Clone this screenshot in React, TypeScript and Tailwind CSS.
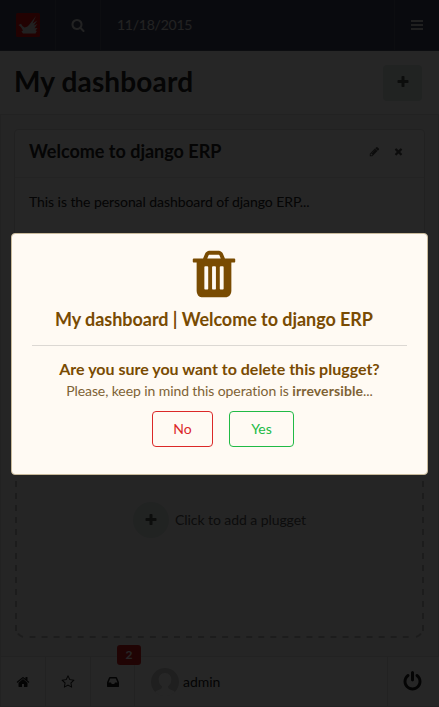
import type { ReactNode } from "react";

const paths = {
  search:
    "M1216 832q0-185-131.5-316.5t-316.5-131.5-316.5 131.5-131.5 316.5 131.5 316.5 316.5 131.5 316.5-131.5 131.5-316.5zm512 832q0 52-38 90t-90 38q-54 0-90-38l-343-342q-179 124-399 124-143 0-273.5-55.5t-225-150-150-225-55.5-273.5 55.5-273.5 150-225 225-150 273.5-55.5 273.5 55.5 225 150 150 225 55.5 273.5q0 220-124 399l343 343q37 37 37 90z",
  trash:
    "M704 1376v-704q0-14-9-23t-23-9h-64q-14 0-23 9t-9 23v704q0 14 9 23t23 9h64q14 0 23-9t9-23zm256 0v-704q0-14-9-23t-23-9h-64q-14 0-23 9t-9 23v704q0 14 9 23t23 9h64q14 0 23-9t9-23zm256 0v-704q0-14-9-23t-23-9h-64q-14 0-23 9t-9 23v704q0 14 9 23t23 9h64q14 0 23-9t9-23zm-544-992h448l-48-117q-7-9-17-11h-317q-10 2-17 11zm928 32v64q0 14-9 23t-23 9h-96v948q0 83-47 143.5t-113 60.5h-832q-66 0-113-58.5t-47-141.5v-952h-96q-14 0-23-9t-9-23v-64q0-14 9-23t23-9h309l70-167q15-37 54-63t79-26h320q40 0 79 26t54 63l70 167h309q14 0 23 9t9 23z",
  plus:
    "M1600 736v192q0 40-28 68t-68 28h-416v416q0 40-28 68t-68 28h-192q-40 0-68-28t-28-68v-416h-416q-40 0-68-28t-28-68v-192q0-40 28-68t68-28h416v-416q0-40 28-68t68-28h192q40 0 68 28t28 68v416h416q40 0 68 28t28 68z",
  pencil:
    "M491 1536l91-91-235-235-91 91v107h128v128h107zm523-928q0-22-22-22-10 0-17 7l-542 542q-7 7-7 17 0 22 22 22 10 0 17-7l542-542q7-7 7-17zm-54-192l416 416-832 832h-416v-416zm683 96q0 53-37 90l-166 166-416-416 166-165q36-38 90-38 53 0 91 38l235 234q37 39 37 91z",
  close:
    "M1490 1322q0 40-28 68l-136 136q-28 28-68 28t-68-28l-294-294-294 294q-28 28-68 28t-68-28l-136-136q-28-28-28-68t28-68l294-294-294-294q-28-28-28-68t28-68l136-136q28-28 68-28t68 28l294 294 294-294q28-28 68-28t68 28l136 136q28 28 28 68t-28 68l-294 294 294 294q28 28 28 68z",
  power:
    "M1664 896q0 156-61 298t-164 245-245 164-298 61-298-61-245-164-164-245-61-298q0-182 80.5-343t226.5-270q43-32 95.5-25t83.5 50q32 42 24.5 94.5t-49.5 84.5q-98 74-151.5 181t-53.5 228q0 104 40.5 198.5t109.5 163.5 163.5 109.5 198.5 40.5 198.5-40.5 163.5-109.5 109.5-163.5 40.5-198.5q0-121-53.5-228t-151.5-181q-42-32-49.5-84.5t24.5-94.5q31-43 84-50t95 25q146 109 226.5 270t80.5 343zm-640-768v640q0 52-38 90t-90 38-90-38-38-90v-640q0-52 38-90t90-38 90 38 38 90z",
  home:
    "M1472 992v480q0 26-19 45t-45 19h-384v-384h-256v384h-384q-26 0-45-19t-19-45v-480q0-1 .5-3t.5-3l575-474 575 474q1 2 1 6zm223-69l-62 74q-8 9-21 11h-3q-13 0-21-7l-692-577-692 577q-12 8-24 7-13-2-21-11l-62-74q-8-10-7-23.5t11-21.5l719-599q32-26 76-26t76 26l244 204v-195q0-14 9-23t23-9h192q14 0 23 9t9 23v408l219 182q10 8 11 21.5t-7 23.5z",
  star:
    "M1201 1004l306-297-422-62-189-382-189 382-422 62 306 297-73 421 378-199 377 199zm527-357q0 22-26 48l-363 354 86 500q1 7 1 20 0 50-41 50-19 0-40-12l-449-236-449 236q-22 12-40 12-21 0-31.5-14.5t-10.5-35.5q0-6 2-20l86-500-364-354q-25-27-25-48 0-37 56-46l502-73 225-455q19-41 49-41t49 41l225 455 502 73q56 9 56 46z",
  inbox:
    "M1151 960h316q-1-3-2.5-8.5t-2.5-7.5l-212-496h-708l-212 496q-1 3-2.5 8.5t-2.5 7.5h316l95 192h320zm513 30v482q0 26-19 45t-45 19h-1408q-26 0-45-19t-19-45v-482q0-62 25-123l238-552q10-25 36.5-42t52.5-17h832q26 0 52.5 17t36.5 42l238 552q25 61 25 123z",
};

function Icon({ name, className }: { name: keyof typeof paths; className: string }) {
  return (
    <svg viewBox="0 0 1792 1792" fill="currentColor" className={`shrink-0 ${className}`}>
      <path d={paths[name]} />
    </svg>
  );
}

function Logo() {
  return (
    <svg viewBox="0 0 24 24" className="size-6 shrink-0">
      <rect width="24" height="24" rx="1.5" fill="#e01212" />
      <path
        d="M2.500 12 5 10.700Q6.500 14 8.500 14.600Q11.500 14 13 12L20 3 16.500 10.500 21.200 7.500 17.800 12.600 21.300 11 18.500 15.200 21.500 15 19.500 17.500 20.800 17.900 19.500 20.500H7L5.500 18.500 7 17.500Q6 14 2.500 12Z"
        fill="#dcdcdc"
      />
    </svg>
  );
}

function Header() {
  return (
    <header className="flex h-[51px] border-b border-[#55596a] bg-[#3f4560] text-[#e4e4e4]">
      <div className="flex w-14 items-center border-r border-[#51566b] pl-4">
        <Logo />
      </div>
      <div className="flex w-[45px] items-center justify-center border-r border-[#51566b]">
        <Icon name="search" className="size-[14px]" />
      </div>
      <div className="flex items-center pb-0.5 pl-4 text-[14px] tracking-[-0.25px]">11/18/2015</div>
      <div className="ml-auto flex w-[45px] items-center justify-center border-l border-[#51566b]">
        <div className="flex w-3 flex-col gap-0.5">
          <i className="h-0.5 bg-[#d4d4d4]" />
          <i className="h-0.5 bg-[#d4d4d4]" />
          <i className="h-0.5 bg-[#d4d4d4]" />
        </div>
      </div>
    </header>
  );
}

function FooterCell({ children, className }: { children: ReactNode; className: string }) {
  return (
    <div className={`flex items-center justify-center border-r border-[#e4e4e4] ${className}`}>
      {children}
    </div>
  );
}

function Footer() {
  return (
    <footer className="flex h-[51px] border-y border-l border-[#e4e4e4] bg-white text-[#202020]">
      <FooterCell className="w-[45px]">
        <Icon name="home" className="size-[14px]" />
      </FooterCell>
      <FooterCell className="w-[45px]">
        <Icon name="star" className="size-[14px]" />
      </FooterCell>
      <FooterCell className="relative w-[44px]">
        <Icon name="inbox" className="size-[14px]" />
        <span className="absolute -top-3 left-[26px] flex h-5 w-6 items-center justify-center rounded-[3px] bg-[#d81c20] text-[12px] font-bold text-white">
          2
        </span>
      </FooterCell>
      <div className="flex items-center gap-1 pl-4 text-[14px] tracking-[-0.06px]">
        <svg viewBox="0 0 28 28" className="size-7">
          <clipPath id="avatar">
            <circle cx="14" cy="14" r="14" />
          </clipPath>
          <g clipPath="url(#avatar)">
            <rect width="28" height="28" fill="#cfcfcf" />
            <path d="M14 5c-4 0-6.300 3-6.300 6.500 0 3 1.300 5.500 3.300 6.700.3 2-1 2.800-3 3.600-2.500 1-5 2-6 6.200h24c-1-4.200-3.500-5.200-6-6.200-2-.8-3.300-1.600-3-3.600 2-1.200 3.300-3.700 3.300-6.700C20.300 8 18 5 14 5Z" fill="#fff" />
          </g>
        </svg>
        <span>admin</span>
      </div>
      <div className="ml-auto flex w-[52px] items-center justify-center border-l border-[#e4e4e4] pr-px">
        <Icon name="power" className="mr-px size-[21px]" />
      </div>
    </footer>
  );
}

function DeleteDialog() {
  return (
    <section className="flex h-[242px] w-[417px] flex-col items-center rounded border border-[#c9ba9b] bg-[#fffaf3] px-5 text-[#794b02]">
      <Icon name="trash" className="mt-[13px] mr-[11px] size-[54px]" />
      <h2 className="mt-[6px] mr-[11px] text-[18px] leading-[24px] font-bold tracking-[-0.05px] whitespace-nowrap">
        My dashboard | Welcome to django ERP
      </h2>
      <hr className="mt-[14px] w-full border-t border-[#dcd8d3]" />
      <h3 className="mt-[13px] text-[16px] leading-5 font-bold">
        Are you sure you want to delete this plugget?
      </h3>
      <p className="mt-[2px] text-[14px] leading-5 tracking-[-0.09px] text-[#7e6235]">
        Please, keep in mind this operation is <b className="tracking-[0.1px]">irreversible</b>...
      </p>
      <div className="mt-[10px] ml-[7px] flex gap-4">
        <button className="h-9 w-[61px] rounded border border-[#db2828] pb-0.5 text-[14px] text-[#db2828]">No</button>
        <button className="h-9 w-[65px] rounded border border-[#21ba45] pb-0.5 text-[14px] text-[#21ba45]">Yes</button>
      </div>
    </section>
  );
}

/* Dashed outline with even six pixel dashes around the drop area. */
function DashedOutline() {
  return (
    <svg
      viewBox="0 0 411 370"
      fill="none"
      stroke="#bdbdbd"
      strokeWidth="2"
      className="pointer-events-none absolute inset-0 h-full w-full"
    >
      <path d="M2 363V0M409 363V0" strokeDasharray="6 6" />
      <path d="M15.500 369H396" strokeDasharray="6 6.040" />
      <path d="M4 365.500Q5.500 368 9 369M407 365.500Q405.500 368 402 369" />
    </svg>
  );
}

export default function App() {
  return (
    <div className="relative h-[707px] w-[439px] overflow-hidden font-['Lato',sans-serif] text-[#222] [font-variant-ligatures:none]">
      <div className="flex h-full flex-col bg-[#f6f6f6]">
        <Header />
        <div className="flex h-[63px] items-center justify-between bg-[#fdfdfd] pr-[17px] pl-[14px]">
          <h1 className="pb-1 text-[28px] leading-8 font-bold tracking-[0.15px]">My dashboard</h1>
          <button className="flex h-9 w-[39px] items-center justify-center rounded bg-[#dce6e3] pb-px text-[#505a55]">
            <Icon name="plus" className="size-[14px]" />
          </button>
        </div>
        <main className="flex flex-1 flex-col border border-b-0 border-[#e2e2e2] px-[13px] pt-[14px] pb-[18px]">
          <section className="h-[125px] rounded border border-[#dcdcdc] bg-[#fbfbfb]">
            <div className="flex h-12 items-center border-b border-[#e6e6e6] px-[14px] pb-1">
              <h2 className="text-[18px] font-bold">Welcome to django ERP</h2>
              <Icon name="pencil" className="ml-auto size-[11px] text-[#505050]" />
              <Icon name="close" className="mr-[6px] ml-[13px] size-[11px] text-[#505050]" />
            </div>
            <p className="px-[14px] pt-[14px] text-[14px] leading-5 tracking-[-0.07px]">
              This is the personal dashboard of django ERP...
            </p>
          </section>
          <section className="relative mt-[14px] flex h-[370px] items-center justify-center pt-[134px]">
            <DashedOutline />
            <div className="flex items-center gap-[6px]">
              <span className="flex size-9 items-center justify-center rounded-full bg-[#dce6e3] text-[#505a55]">
                <Icon name="plus" className="size-[14px]" />
              </span>
              <span className="pb-0.5 text-[14px] tracking-[-0.07px] text-[#555]">Click to add a plugget</span>
            </div>
          </section>
        </main>
        <Footer />
      </div>
      <div className="absolute inset-0 flex justify-start bg-black/85 pt-[233px] pl-[11px]">
        <DeleteDialog />
      </div>
    </div>
  );
}
